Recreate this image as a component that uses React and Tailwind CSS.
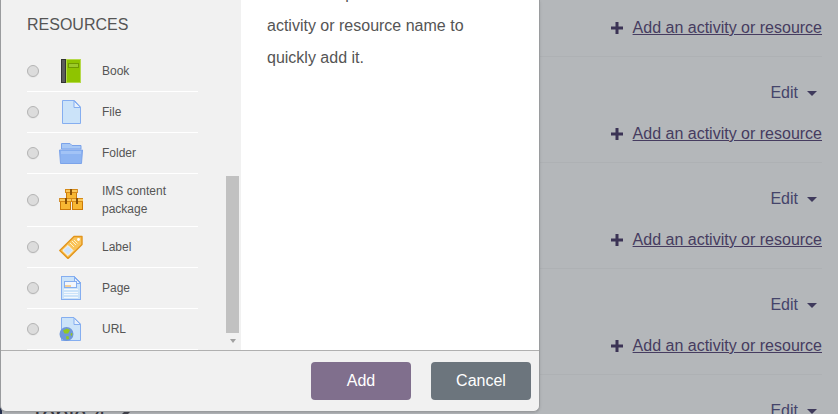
function BookIcon() {
  return (
    <svg width="24" height="24" viewBox="0 0 24 24" shapeRendering="crispEdges">
      <rect x="2" y="0" width="5" height="24" fill="#333" />
      <rect x="3" y="1" width="3" height="22" fill="#5c5c5c" />
      <rect x="7" y="0" width="15" height="24" fill="#b5d94a" />
      <rect x="8" y="1" width="13" height="22" fill="#8fc400" />
      <rect x="9.5" y="4.5" width="10" height="4" fill="#9cc92a" stroke="#6f9a00" strokeWidth="1" />
    </svg>
  );
}

function FileIcon() {
  return (
    <svg width="24" height="24" viewBox="0 0 24 24">
      <path d="M3.5.5H15.5L21.5 7V23.5H3.5Z" fill="#cbe3f9" stroke="#85aef0" />
      <path d="M15 1V7.5H21.5Z" fill="#e6f0fb" stroke="#85aef0" />
    </svg>
  );
}

function FolderIcon() {
  return (
    <svg width="24" height="24" viewBox="0 0 24 24">
      <path d="M2.5 6V2.5H11L13 4.5H22V8H2.5Z" fill="#a8c8f5" stroke="#7ba3ea" />
      <path d="M.5 9H23.5L22.5 22.5H1.5Z" fill="#8db4f2" stroke="#7ba3ea" />
      <path d="M2 10H22V13H2Z" fill="#a2c3f6" />
    </svg>
  );
}

function Crate({ x, y }) {
  return (
    <g>
      <rect x={x} y={y + 3} width="10" height="8" fill="#f7b733" stroke="#cc7a08" />
      <rect x={x - 1} y={y} width="12" height="3.5" fill="#fbc85a" stroke="#cc7a08" strokeWidth="0.8" />
      <rect x={x + 4} y={y} width="2" height="6" fill="#8a5208" />
    </g>
  );
}

function PackageIcon() {
  return (
    <svg width="24" height="24" viewBox="0 0 24 24" shapeRendering="crispEdges">
      <Crate x={7} y={1} />
      <Crate x={1.5} y={10} />
      <Crate x={13} y={10} />
    </svg>
  );
}

function LabelIcon() {
  return (
    <svg width="24" height="24" viewBox="0 0 24 24">
      <path d="M15 1.5H23V9.5L9 23.5L.8 15.5Z" fill="#f9c35a" stroke="#e2951c" strokeWidth="1.4" strokeLinejoin="round" />
      <path d="M3.8 15.5L9 10.5L14 15.5L9 20.5Z" fill="#cfe3fa" stroke="#fff" strokeWidth="0.8" />
      <path d="M11 8L15 12M13 6L17 10M15 5L18.5 8.5" stroke="#fff1c8" strokeWidth="1" />
      <circle cx="19.5" cy="4.5" r="1.4" fill="#fff" />
    </svg>
  );
}

function PageIcon() {
  return (
    <svg width="24" height="24" viewBox="0 0 24 24" shapeRendering="crispEdges">
      <path d="M2.5.5H15L21.5 7V23.5H2.5Z" fill="#cbe3f9" stroke="#85aef0" />
      <path d="M15 1V7.5H21.5Z" fill="#e6f0fb" stroke="#85aef0" />
      <rect x="5" y="5" width="12" height="6" fill="#f3f6fb" stroke="#85aef0" />
      <rect x="6" y="9" width="6" height="1.5" fill="#f3cf9a" />
      <path d="M5 13.5H19M5 16H19M5 18.5H19M5 21H19" stroke="#f3f8fd" />
    </svg>
  );
}

function UrlIcon() {
  return (
    <svg width="24" height="24" viewBox="0 0 24 24">
      <path d="M2.5.5H15L21.5 7V23.5H2.5Z" fill="#cbe3f9" stroke="#85aef0" />
      <path d="M15 1V7.5H21.5Z" fill="#e6f0fb" stroke="#85aef0" />
      <circle cx="7.5" cy="17" r="7" fill="#6f97d9" />
      <path d="M4 13.5L8 11.5L11 13L9 16.5L5.5 16.5Z" fill="#93c81e" />
      <path d="M7 19.5L9.5 19L10 22L7.5 22.5Z" fill="#93c81e" />
      <path d="M12 16L13.5 16.5L13 19L11.5 18Z" fill="#93c81e" />
    </svg>
  );
}

const resources = [
  { name: "Book", Icon: BookIcon },
  { name: "File", Icon: FileIcon },
  { name: "Folder", Icon: FolderIcon },
  { name: "IMS content package", Icon: PackageIcon, tall: true },
  { name: "Label", Icon: LabelIcon },
  { name: "Page", Icon: PageIcon },
  { name: "URL", Icon: UrlIcon },
];

function PlusIcon() {
  return (
    <svg width="12" height="12" viewBox="0 0 12 12" className="shrink-0">
      <path d="M4.5 0H7.5V4.5H12V7.5H7.5V12H4.5V7.5H0V4.5H4.5Z" fill="#3b3355" />
    </svg>
  );
}

function AddLink() {
  return (
    <div className="flex items-center gap-[10px] leading-6">
      <PlusIcon />
      <a className="text-[#463c60] underline">Add an activity or resource</a>
    </div>
  );
}

function EditMenu() {
  return (
    <div className="flex items-center gap-[9px] leading-6 text-[#44446a]">
      <span>Edit</span>
      <span className="mr-[5px] h-0 w-0 border-x-[5.5px] border-t-[5px] border-x-transparent border-t-[#3f3a5c]" />
    </div>
  );
}

function TopicRow({ first }) {
  return (
    <div className="flex h-[106px] justify-between border-b border-[#aeb1b4]">
      <div className="mt-[27px] h-4 w-[2px] bg-[#26304f]" />
      <div className="flex flex-col items-end gap-[17px] pt-6">
        {first ? <div className="h-6" /> : <EditMenu />}
        <AddLink />
      </div>
    </div>
  );
}

function ResourceRow({ name, Icon, tall }) {
  return (
    <div className={`flex items-center border-b border-white ${tall ? "h-[53px]" : "h-[41px]"}`}>
      <span className="h-3 w-3 shrink-0 rounded-full border border-[#b4b4b4] bg-[#dcdcdc] shadow-[0_1px_0_#e8e8e8]" />
      <span className="ml-5 shrink-0">
        <Icon />
      </span>
      <span className="ml-[19px] text-xs leading-[18px] text-[#555]">{name}</span>
    </div>
  );
}

export default function App() {
  return (
    <div className="relative h-[414px] w-[838px] overflow-hidden bg-[#b4b7ba] font-['Liberation_Sans',Arial,sans-serif] text-base">
      <div className="-mt-[49px] pr-4">
        <TopicRow first />
        <TopicRow />
        <TopicRow />
        <TopicRow />
        <div className="flex items-start justify-between">
          <div className="mt-[27px] h-4 w-[2px] bg-[#26304f]" />
          <div className="mt-6 mr-auto ml-[28px] flex items-center gap-3 text-2xl leading-8 text-[#3a3a44]">
            Topic 4
            <svg width="14" height="14" viewBox="0 0 14 14" className="-mt-[2px]">
              <path d="M1 13L2 9L10 1L13 4L5 12Z" fill="#44444e" />
            </svg>
          </div>
          <div className="pt-6">
            <EditMenu />
          </div>
        </div>
      </div>

      {/* modal sits over the course page, top edge scrolled out of view */}
      <div className="absolute top-0 left-0 flex h-[412px] w-[540px] flex-col overflow-hidden rounded-b-md border-x border-b border-[#9a9c9e] bg-[#f1f1f1] shadow-sm">
        <div className="flex min-h-0 flex-1">
          <div className="flex w-[240px] shrink-0 pl-[26px]">
            <div className="w-[171px] shrink-0">
              <h3 className="flex h-[51px] items-center pb-[2px] text-base font-normal text-[#555]">RESOURCES</h3>
              {resources.map((r) => (
                <ResourceRow key={r.name} {...r} />
              ))}
            </div>
            <div className="ml-[28px] flex w-[13px] shrink-0 flex-col items-center pt-[176px]">
              <div className="h-[157px] w-[13px] bg-[#c1c1c1]" />
              <span className="mt-[6px] h-0 w-0 border-x-[3.5px] border-t-[4px] border-x-transparent border-t-[#a0a0a0]" />
            </div>
          </div>
          <div className="min-w-0 flex-1 overflow-hidden bg-white pr-6 pl-[26px]">
            <p className="-mt-[22px] text-base leading-8 text-[#555]">
              view its help. Double-click on an activity or resource name to quickly add it.
            </p>
          </div>
        </div>
        <div className="flex h-[61px] shrink-0 items-start justify-end gap-5 border-t border-[#b0b0b0] pt-[11px] pr-2">
          <button className="h-[38px] w-[100px] rounded bg-[#806f8d] text-base text-white">Add</button>
          <button className="h-[38px] w-[100px] rounded bg-[#6c757d] text-base text-white">Cancel</button>
        </div>
      </div>
    </div>
  );
}
